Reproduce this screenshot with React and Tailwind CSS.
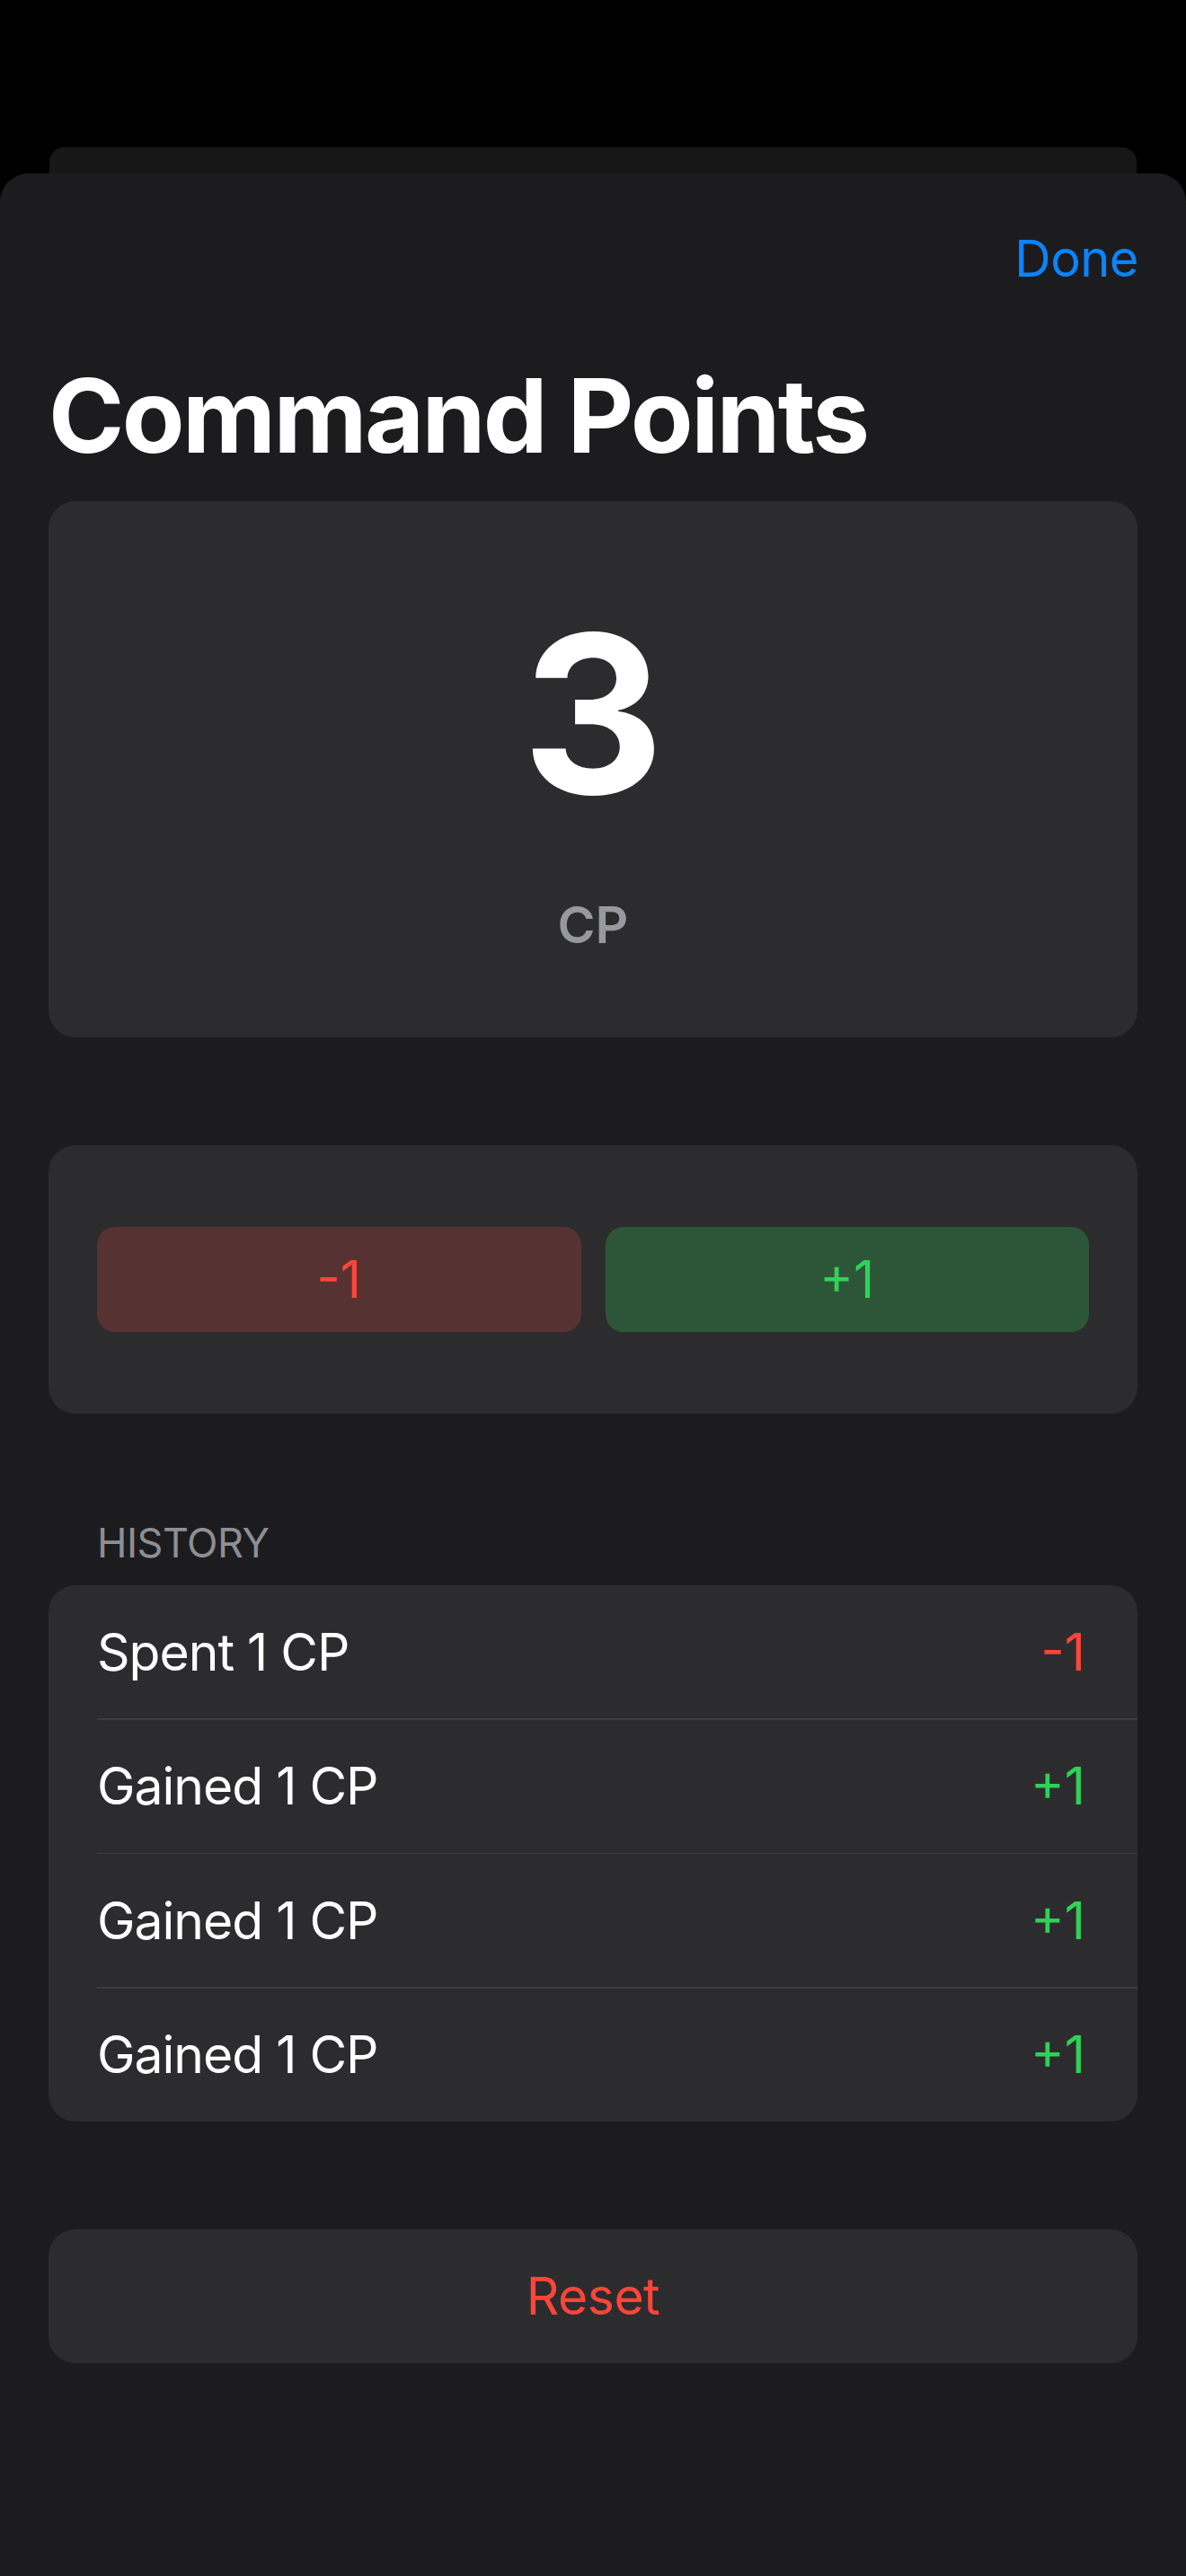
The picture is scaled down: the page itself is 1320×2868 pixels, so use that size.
import React from "react";

const history = [
  { label: "Spent 1 CP", delta: "-1", up: false },
  { label: "Gained 1 CP", delta: "+1", up: true },
  { label: "Gained 1 CP", delta: "+1", up: true },
  { label: "Gained 1 CP", delta: "+1", up: true },
];

export default function App() {
  return (
    <div className="w-[1320px] h-[2868px] bg-black font-[family-name:Inter,sans-serif] text-white antialiased overflow-hidden flex flex-col">
      {/* stacked card behind */}
      <div className="h-[164px] shrink-0" />
      <div className="mx-[55px] h-[29px] shrink-0 bg-[#171717] rounded-t-[16px]" />
      {/* sheet */}
      <div className="flex-1 bg-[#1c1c1e] rounded-t-[32px] flex flex-col">
        <div className="mt-[67px] flex justify-end pr-[53px]">
          <button className="text-[56px] leading-[56px] tracking-[-0.5px] text-[#0a84ff]">Done</button>
        </div>

        <h1 className="mt-[90px] pl-[54px] text-[114px] leading-[114px] font-bold tracking-[-2.6px]">
          Command Points
        </h1>

        <div className="mt-[38px] mx-[54px] h-[597px] bg-[#2c2c2e] rounded-[30px] flex flex-col items-center">
          <div className="mt-[115px] text-[245px] leading-[245px] font-bold">3</div>
          <div className="mt-[83px] text-[57px] leading-[57px] font-semibold text-[#98989f]">CP</div>
        </div>

        <div className="mt-[120px] mx-[54px] h-[299px] bg-[#2c2c2e] rounded-[30px] px-[54px] flex items-center gap-[27px]">
          <button className="flex-1 h-[117px] rounded-[20px] bg-[#573232] text-[#ff453a] text-[57px] leading-[57px]">
            -1
          </button>
          <button className="flex-1 h-[117px] rounded-[20px] bg-[#2d5639] text-[#30d158] text-[57px] leading-[57px]">
            +1
          </button>
        </div>

        <div className="mt-[121px] pl-[108px] text-[45px] leading-[45px] tracking-[-0.5px] text-[#8e8e93]">HISTORY</div>

        <div className="mt-[25px] mx-[54px] bg-[#2c2c2e] rounded-[30px] overflow-hidden flex flex-col">
          {history.map((h, i) => (
            <div key={i} className="flex flex-col">
              {i > 0 && <div className="ml-[54px] h-[1.5px] bg-[#3d3d40]" />}
              <div className="h-[148px] flex items-center justify-between pl-[54px] pr-[58px]">
                <span className="text-[57px] leading-[57px] tracking-[-1px]">{h.label}</span>
                <span className={h.up ? "text-[57px] leading-[57px] text-[#30d158]" : "text-[57px] leading-[57px] text-[#ff453a]"}>
                  {h.delta}
                </span>
              </div>
            </div>
          ))}
        </div>

        <button className="mt-[120px] mx-[54px] h-[149px] bg-[#2c2c2e] rounded-[30px] flex items-center justify-center text-[57px] leading-[57px] tracking-[-0.5px] text-[#ff453a]">
          Reset
        </button>
      </div>
    </div>
  );
}
